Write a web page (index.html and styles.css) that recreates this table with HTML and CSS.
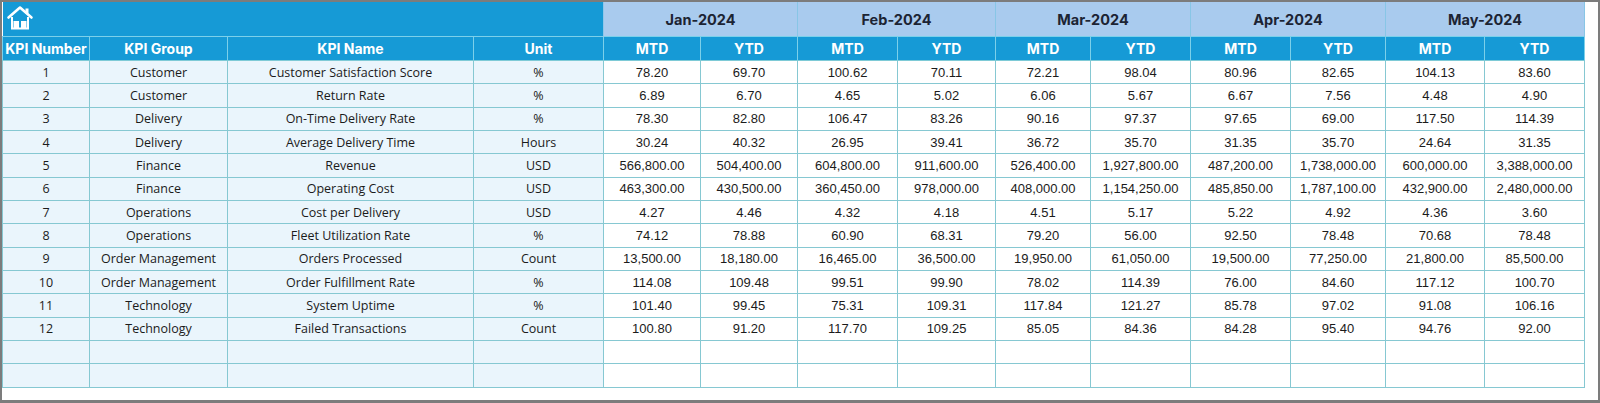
FILE: index.html
```html
<!DOCTYPE html>
<html>
<head>
<meta charset="utf-8">
<link rel="stylesheet" href="styles.css">
</head>
<body>
<div class="frame">
<table class="kpi">
<colgroup>
<col style="width:87px"><col style="width:138px"><col style="width:246px"><col style="width:130px">
<col style="width:97px"><col style="width:97px"><col style="width:100px"><col style="width:98px">
<col style="width:95px"><col style="width:100px"><col style="width:100px"><col style="width:95px">
<col style="width:99px"><col style="width:100px">
</colgroup>
<thead>
<tr class="h1">
<th colspan="4" class="home-cell">
<svg class="home" viewBox="0 0 28 25" width="28" height="25">
<path d="M2.5 12.5 L14 2.5 L25.5 12.5" fill="none" stroke="#fff" stroke-width="2.6" stroke-linecap="round" stroke-linejoin="round"/>
<rect x="19.5" y="3.5" width="3" height="5" fill="#fff"/>
<path d="M6 12 V23.5 H22 V12" fill="none" stroke="#fff" stroke-width="2"/>
<rect x="7.5" y="16" width="5.5" height="7" fill="#fff"/>
<rect x="15" y="16" width="5.5" height="7" fill="#fff"/>
</svg>
</th>
<th colspan="2" class="month">Jan-2024</th>
<th colspan="2" class="month">Feb-2024</th>
<th colspan="2" class="month">Mar-2024</th>
<th colspan="2" class="month">Apr-2024</th>
<th colspan="2" class="month">May-2024</th>
</tr>
<tr class="h2">
<th>KPI Number</th><th>KPI Group</th><th>KPI Name</th><th>Unit</th>
<th>MTD</th><th>YTD</th><th>MTD</th><th>YTD</th><th>MTD</th><th>YTD</th><th>MTD</th><th>YTD</th><th>MTD</th><th>YTD</th>
</tr>
</thead>
<tbody>
<tr><td class="l">1</td><td class="l">Customer</td><td class="l">Customer Satisfaction Score</td><td class="l">%</td><td>78.20</td><td>69.70</td><td>100.62</td><td>70.11</td><td>72.21</td><td>98.04</td><td>80.96</td><td>82.65</td><td>104.13</td><td>83.60</td></tr>
<tr><td class="l">2</td><td class="l">Customer</td><td class="l">Return Rate</td><td class="l">%</td><td>6.89</td><td>6.70</td><td>4.65</td><td>5.02</td><td>6.06</td><td>5.67</td><td>6.67</td><td>7.56</td><td>4.48</td><td>4.90</td></tr>
<tr><td class="l">3</td><td class="l">Delivery</td><td class="l">On-Time Delivery Rate</td><td class="l">%</td><td>78.30</td><td>82.80</td><td>106.47</td><td>83.26</td><td>90.16</td><td>97.37</td><td>97.65</td><td>69.00</td><td>117.50</td><td>114.39</td></tr>
<tr><td class="l">4</td><td class="l">Delivery</td><td class="l">Average Delivery Time</td><td class="l">Hours</td><td>30.24</td><td>40.32</td><td>26.95</td><td>39.41</td><td>36.72</td><td>35.70</td><td>31.35</td><td>35.70</td><td>24.64</td><td>31.35</td></tr>
<tr><td class="l">5</td><td class="l">Finance</td><td class="l">Revenue</td><td class="l">USD</td><td>566,800.00</td><td>504,400.00</td><td>604,800.00</td><td>911,600.00</td><td>526,400.00</td><td>1,927,800.00</td><td>487,200.00</td><td>1,738,000.00</td><td>600,000.00</td><td>3,388,000.00</td></tr>
<tr><td class="l">6</td><td class="l">Finance</td><td class="l">Operating Cost</td><td class="l">USD</td><td>463,300.00</td><td>430,500.00</td><td>360,450.00</td><td>978,000.00</td><td>408,000.00</td><td>1,154,250.00</td><td>485,850.00</td><td>1,787,100.00</td><td>432,900.00</td><td>2,480,000.00</td></tr>
<tr><td class="l">7</td><td class="l">Operations</td><td class="l">Cost per Delivery</td><td class="l">USD</td><td>4.27</td><td>4.46</td><td>4.32</td><td>4.18</td><td>4.51</td><td>5.17</td><td>5.22</td><td>4.92</td><td>4.36</td><td>3.60</td></tr>
<tr><td class="l">8</td><td class="l">Operations</td><td class="l">Fleet Utilization Rate</td><td class="l">%</td><td>74.12</td><td>78.88</td><td>60.90</td><td>68.31</td><td>79.20</td><td>56.00</td><td>92.50</td><td>78.48</td><td>70.68</td><td>78.48</td></tr>
<tr><td class="l">9</td><td class="l">Order Management</td><td class="l">Orders Processed</td><td class="l">Count</td><td>13,500.00</td><td>18,180.00</td><td>16,465.00</td><td>36,500.00</td><td>19,950.00</td><td>61,050.00</td><td>19,500.00</td><td>77,250.00</td><td>21,800.00</td><td>85,500.00</td></tr>
<tr><td class="l">10</td><td class="l">Order Management</td><td class="l">Order Fulfillment Rate</td><td class="l">%</td><td>114.08</td><td>109.48</td><td>99.51</td><td>99.90</td><td>78.02</td><td>114.39</td><td>76.00</td><td>84.60</td><td>117.12</td><td>100.70</td></tr>
<tr><td class="l">11</td><td class="l">Technology</td><td class="l">System Uptime</td><td class="l">%</td><td>101.40</td><td>99.45</td><td>75.31</td><td>109.31</td><td>117.84</td><td>121.27</td><td>85.78</td><td>97.02</td><td>91.08</td><td>106.16</td></tr>
<tr><td class="l">12</td><td class="l">Technology</td><td class="l">Failed Transactions</td><td class="l">Count</td><td>100.80</td><td>91.20</td><td>117.70</td><td>109.25</td><td>85.05</td><td>84.36</td><td>84.28</td><td>95.40</td><td>94.76</td><td>92.00</td></tr>
<tr><td class="l"></td><td class="l"></td><td class="l"></td><td class="l"></td><td></td><td></td><td></td><td></td><td></td><td></td><td></td><td></td><td></td><td></td></tr>
<tr><td class="l"></td><td class="l"></td><td class="l"></td><td class="l"></td><td></td><td></td><td></td><td></td><td></td><td></td><td></td><td></td><td></td><td></td></tr>
</tbody>
</table>
</div>
</body>
</html>
```

FILE: styles.css
```css
html, body {
  margin: 0;
  padding: 0;
  background: #ffffff;
}
.frame {
  width: 1600px;
  height: 403px;
  box-sizing: border-box;
  border: 2px solid #7c7c7c;
  border-bottom-width: 3px;
  background: #ffffff;
  overflow: hidden;
}
.kpi {
  border-collapse: collapse;
  table-layout: fixed;
  width: 1582px;
  font-family: "Liberation Sans", Arial, sans-serif;
  font-size: 13px;
  color: #1b1b1b;
}
.kpi th, .kpi td {
  padding: 0;
  text-align: center;
  white-space: nowrap;
  overflow: hidden;
}
.h1 th {
  height: 34px;
}
.home-cell {
  background: #169ad6;
  text-align: left !important;
  vertical-align: top;
  border-right: 1px solid #8fc7ea;
}
.home {
  display: block;
  margin: 3px 0 0 3px;
}
.month {
  background: #a9cbee;
  color: #1c2433;
  font-family: Inter, "Noto Sans", sans-serif;
  font-weight: 700;
  font-size: 14.5px;
  border-left: 1px solid #88c6e6;
  border-right: 1px solid #88c6e6;
}
.h2 th {
  height: 23px;
  background: #169ad6;
  color: #ffffff;
  font-family: Inter, "Noto Sans", sans-serif;
  font-weight: 700;
  font-size: 14px;
  border: 1px solid #7cd0ea;
  border-bottom-color: #7ecad6;
}
.kpi tbody td {
  height: 22.33px;
  border: 1px solid #86c8d2;
  background: #ffffff;
}
.kpi tbody td.l {
  background: #eaf5fc;
  font-family: "Open Sans", "Noto Sans", sans-serif;
  font-size: 12.5px;
}
```
